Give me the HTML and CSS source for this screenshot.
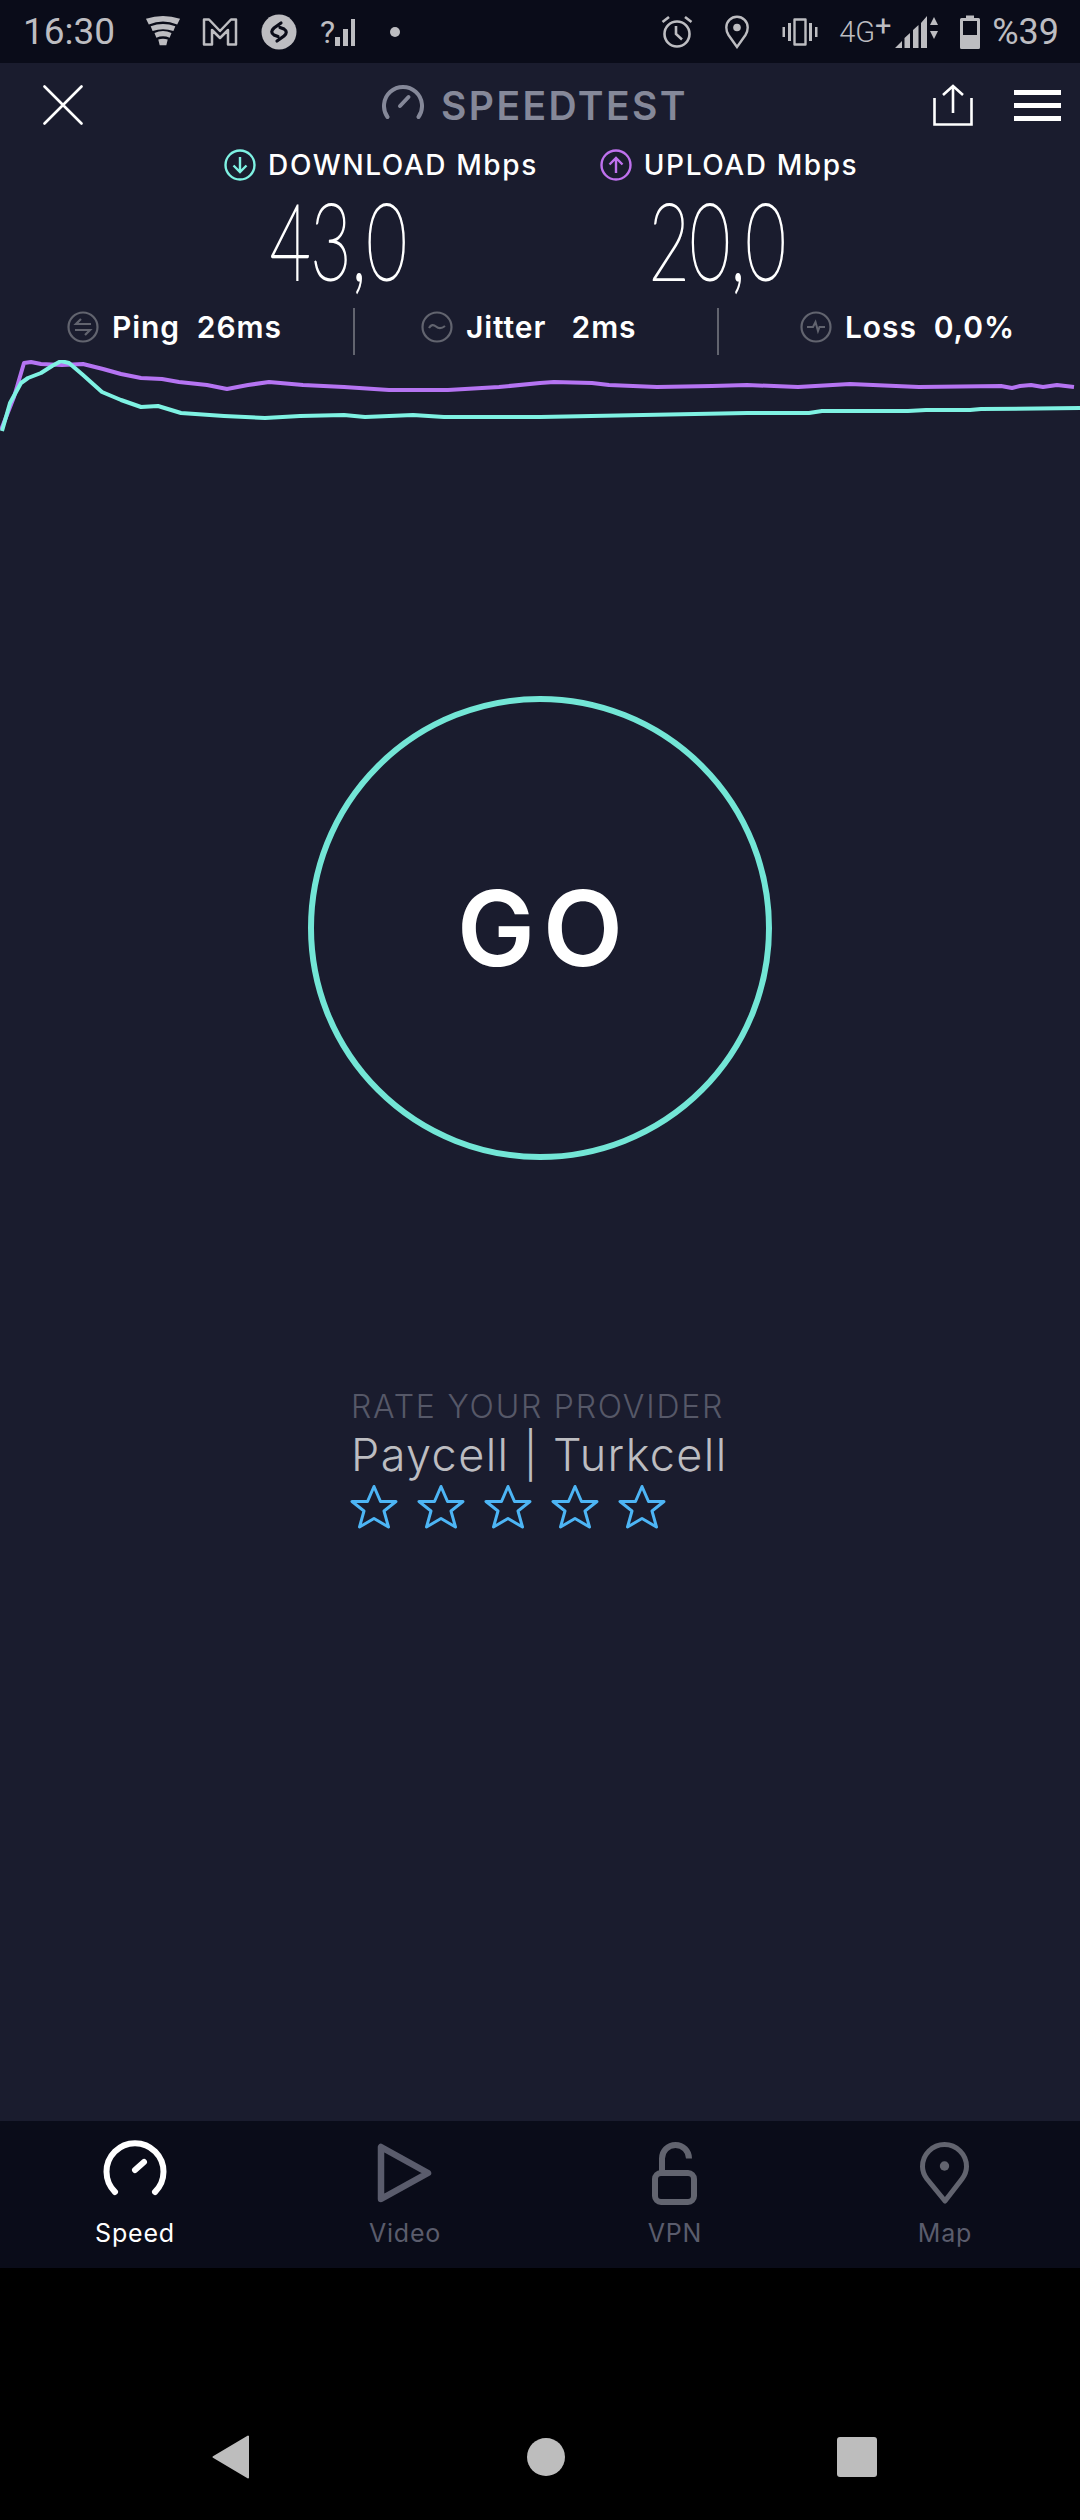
FILE: index.html
```html
<!DOCTYPE html>
<html>
<head>
<meta charset="UTF-8">
<title>Speedtest</title>
<link rel="stylesheet" href="styles.css">
</head>
<body>
<div class="phone">
	<div class="statusbar">
		<div class="status-left">
			<span class="clock">16:30</span>
			<svg class="ico-wifi" width="36" height="38" viewBox="0 0 38 38"><path d="M1 5Q19-1 37 5L34 11Q19 5 4 11Z M6 13Q19 8 32 13L30 18Q19 14 8 18Z M10 20Q19 16 28 20L26 25Q19 22 12 25Z M14 27Q19 25 24 27L22.500 33H15.500Z" fill="#bdbdc1"/></svg>
			<svg class="ico-gmail" width="36" height="30" viewBox="0 0 36 30"><path d="M2 2.500H7L18 14L29 2.500H34V27.500H26V13L18 21L10 13V27.500H2Z" fill="none" stroke="#bdbdc1" stroke-width="2.500" stroke-linejoin="round"/></svg>
			<svg class="ico-shazam" width="36" height="36" viewBox="0 0 36 36"><circle cx="18" cy="18" r="17.500" fill="#bdbdc1"/><path d="M20 9L13 14Q8.500 18 13 21L17 22.500M16 27L23 22Q27.500 18 23 15L19 13.500" fill="none" stroke="#0a0c19" stroke-width="3.200" stroke-linecap="round"/></svg>
			<span class="ico-nosim"><i>?</i><svg width="22" height="30" viewBox="0 0 22 30"><path d="M1 20h5v9H1Z M9 12h5v17H9Z M17 2h4v27h-4Z" fill="#bdbdc1"/></svg></span>
			<span class="dot"></span>
		</div>
		<div class="status-right">
			<svg width="32" height="34" viewBox="0 0 32 34"><circle cx="16" cy="19" r="12.500" fill="none" stroke="#bdbdc1" stroke-width="2.600"/><path d="M15 11V19L21 24.500M1.500 7L8 2M30.500 7L24 2" fill="none" stroke="#bdbdc1" stroke-width="2.600"/></svg>
			<svg class="gap-pin" width="24" height="34" viewBox="0 0 24 34"><path d="M12 32L3.500 20Q1.300 16.500 1.300 12.500A10.700 10.700 0 0 1 22.700 12.500Q22.700 16.500 20.500 20Z" fill="none" stroke="#bdbdc1" stroke-width="2.400"/><circle cx="12" cy="12.500" r="3.800" fill="#bdbdc1"/></svg>
			<svg class="gap-vib" width="36" height="28" viewBox="0 0 36 28"><path d="M12.500 1.500H23.500V26.500H12.500Z" fill="none" stroke="#bdbdc1" stroke-width="2.400" stroke-linejoin="round"/><path d="M6 5h3v18H6Z M27 5h3v18h-3Z M0.500 9h2.500v10H0.500Z M33 9h2.500v10H33Z" fill="#bdbdc1"/></svg>
			<span class="net">4G<b>+</b></span>
			<svg class="ico-signal" width="44" height="34" viewBox="0 0 44 34"><path d="M0 33L7 26V33Z M9.500 33V23L15 18V33Z M18 33V15L23.500 10V33Z M26 33V8L32 1V33Z" fill="#bdbdc1"/><path d="M39 2L43 10H35Z M39 24L43 16H35Z" fill="#bdbdc1"/></svg>
			<svg class="gap-bat" width="20" height="34" viewBox="0 0 20 34"><path d="M6 0.500H14V3H18.500Q20 3 20 4.500V32.500Q20 34 18.500 34H1.500Q0 34 0 32.500V4.500Q0 3 1.500 3H6Z" fill="#bdbdc1"/><rect x="3" y="6" width="14" height="14" fill="#0a0c19"/></svg>
			<span class="pct">%39</span>
		</div>
	</div>

	<div class="app">
		<div class="topbar">
			<svg width="40" height="40" viewBox="0 0 40 40"><path d="M1.500 1.500L38.500 38.500M38.500 1.500L1.500 38.500" stroke="#fff" stroke-width="2.600" stroke-linecap="round"/></svg>
			<div class="brand">
				<svg class="brand-gauge" width="42" height="36" viewBox="0 0 42 36"><path d="M5.500 34A19 19 0 1 1 36.500 34" fill="none" stroke="#858899" stroke-width="4" stroke-linecap="round"/><path d="M18 23L26.500 14" stroke="#858899" stroke-width="4" stroke-linecap="round"/></svg>
				<span>SPEEDTEST</span>
			</div>
			<div class="top-actions">
				<svg width="40" height="42" viewBox="0 0 40 42"><path d="M1.500 14V40.500H38.500V14" fill="none" stroke="#fff" stroke-width="2.600"/><path d="M20 29V2M10 11L20 2L30 11" fill="none" stroke="#fff" stroke-width="2.600"/></svg>
				<div class="burger"><span></span><span></span><span></span></div>
			</div>
		</div>

		<div class="speeds">
			<div class="speed speed-down">
				<div class="speed-label">
					<svg width="32" height="32" viewBox="0 0 32 32"><circle cx="16" cy="16" r="14.500" fill="none" stroke="#7ff2e3" stroke-width="2.400"/><path d="M16 8V23M9.500 16.500L16 23L22.500 16.500" fill="none" stroke="#7ff2e3" stroke-width="2.400"/></svg>
					<span>DOWNLOAD Mbps</span>
				</div>
				<div class="speed-value"><span>43,0</span></div>
			</div>
			<div class="speed speed-up">
				<div class="speed-label">
					<svg width="32" height="32" viewBox="0 0 32 32"><circle cx="16" cy="16" r="14.500" fill="none" stroke="#bf71ee" stroke-width="2.400"/><path d="M16 24V9M9.500 15.500L16 9L22.500 15.500" fill="none" stroke="#bf71ee" stroke-width="2.400"/></svg>
					<span>UPLOAD Mbps</span>
				</div>
				<div class="speed-value"><span>20,0</span></div>
			</div>
		</div>

		<div class="stats">
			<div class="stat stat-ping">
				<svg width="32" height="32" viewBox="0 0 32 32"><circle cx="16" cy="16" r="14.500" fill="none" stroke="#62646f" stroke-width="2.200"/><path d="M14 8L9 13H24M18 24L23 19H8" fill="none" stroke="#62646f" stroke-width="2.200"/></svg>
				<span>Ping&nbsp; 26ms</span>
			</div>
			<div class="stat-sep"></div>
			<div class="stat stat-jitter">
				<svg width="32" height="32" viewBox="0 0 32 32"><circle cx="16" cy="16" r="14.500" fill="none" stroke="#62646f" stroke-width="2.200"/><path d="M8 17Q11 12 15 15.500T24 15" fill="none" stroke="#62646f" stroke-width="2.200"/></svg>
				<span>Jitter&nbsp; &nbsp;2ms</span>
			</div>
			<div class="stat-sep"></div>
			<div class="stat stat-loss">
				<svg width="32" height="32" viewBox="0 0 32 32"><circle cx="16" cy="16" r="14.500" fill="none" stroke="#62646f" stroke-width="2.200"/><path d="M7 16H13L15.500 11L18 20L19.500 16H25" fill="none" stroke="#62646f" stroke-width="2"/></svg>
				<span>Loss&nbsp; 0,0%</span>
			</div>
		</div>

		<svg class="graph" width="1080" height="90" viewBox="0 0 1080 90">
			<path d="M1 70L14 37L24 3L31 2L41 4L62 5L83 4L103 9L121 14L141 18L162 19L179 22L207 25L227 29L248 25L269 22L303 25L344 27L389 30L448 30L499 27L540 23L554 22L592 23L609 25L657 27L712 26L747 25L798 27L850 24L919 27L1001 26L1012 28L1020 26L1031 25L1043 27L1057 25L1074 27" fill="none" stroke="#b574f2" stroke-width="4" stroke-linejoin="round"/>
			<path d="M2 71L10 43L21 23L28 18L41 13L52 6L61 1L69 3L83 15L102 32L121 40L141 47L158 46L181 53L224 56L265 58L300 56L344 55L365 57L413 55L444 57L540 57L643 55L747 53L809 53L822 51L908 51L926 50L970 50L981 49L1080 48" fill="none" stroke="#7ff2e3" stroke-width="4" stroke-linejoin="round"/>
		</svg>

		<div class="go-wrap">
			<div class="go">GO</div>
		</div>

		<div class="rate-wrap">
			<div class="rate">
				<div class="rate-title">RATE YOUR PROVIDER</div>
				<div class="rate-name">Paycell | Turkcell</div>
				<div class="stars">
					<svg width="48" height="46" viewBox="0 0 48 46"><use href="#star"/></svg>
					<svg width="48" height="46" viewBox="0 0 48 46"><use href="#star"/></svg>
					<svg width="48" height="46" viewBox="0 0 48 46"><use href="#star"/></svg>
					<svg width="48" height="46" viewBox="0 0 48 46"><use href="#star"/></svg>
					<svg width="48" height="46" viewBox="0 0 48 46"><use href="#star"/></svg>
				</div>
			</div>
		</div>
	</div>

	<div class="tabs">
		<div class="tab tab-on">
			<svg width="64" height="66" viewBox="0 0 64 66"><path d="M12 53A28.500 28.500 0 1 1 52 53" fill="none" stroke="#fff" stroke-width="6" stroke-linecap="round"/><path d="M32 31L41 23" stroke="#fff" stroke-width="6" stroke-linecap="round"/></svg>
			<span>Speed</span>
		</div>
		<div class="tab">
			<svg width="64" height="66" viewBox="0 0 64 66"><path d="M8 8V60L55 34Z" fill="none" stroke="#5a5c6c" stroke-width="6.500" stroke-linejoin="round"/></svg>
			<span>Video</span>
		</div>
		<div class="tab">
			<svg width="64" height="66" viewBox="0 0 64 66"><path d="M19 32V19.500A13.500 13.500 0 0 1 46 19.500" fill="none" stroke="#62646f" stroke-width="6"/><rect x="12" y="34" width="39" height="29" rx="6" fill="none" stroke="#62646f" stroke-width="6"/></svg>
			<span>VPN</span>
		</div>
		<div class="tab">
			<svg width="64" height="66" viewBox="0 0 64 66"><path d="M32 62L14 40Q9.500 34 9.500 27.500A22 22 0 0 1 53.500 27.500Q53.500 34 49 40Z" fill="none" stroke="#62646f" stroke-width="5" stroke-linejoin="round"/><circle cx="31.500" cy="27" r="4.700" fill="#62646f"/></svg>
			<span>Map</span>
		</div>
	</div>

	<div class="navbar">
		<svg width="38" height="44" viewBox="0 0 38 44"><path d="M36 1.500V42.500L1.500 22Z" fill="#bdbdbd" stroke="#bdbdbd" stroke-width="2" stroke-linejoin="round"/></svg>
		<span class="nav-home"></span>
		<span class="nav-recent"></span>
	</div>
</div>

<svg class="defs" width="0" height="0"><defs><path id="star" d="M24 2.500L30.500 17.500H46L34 27L38.500 43L24 34.500L9.500 43L14 27L2 17.500H17.500Z" fill="none" stroke="#4db5f5" stroke-width="3" stroke-linejoin="round"/></defs></svg>
</body>
</html>
```

FILE: styles.css
```css
html,body{
	margin: 0;
	padding: 0;
	background: #000;
	font-family: "Inter", "Liberation Sans", sans-serif;
}
.phone{
	width: 1080px;
	height: 2520px;
	display: flex;
	flex-direction: column;
	overflow: hidden;
}
.defs{
	position: absolute;
}

/* status bar */
.statusbar{
	height: 63px;
	background: #0a0c19;
	color: #bdbdc1;
	display: flex;
	justify-content: space-between;
	align-items: center;
	padding: 0 21px 0 23px;
}
.status-left,.status-right{
	display: flex;
	align-items: center;
}
.clock{
	font-family: "Roboto", sans-serif;
	font-size: 37px;
	width: 122px;
}
.ico-gmail{
	margin-left: 21px;
}
.ico-shazam{
	margin-left: 23px;
}
.ico-nosim{
	margin-left: 23px;
	display: flex;
	align-items: center;
	width: 34px;
}
.ico-nosim i{
	font: normal 32px "Roboto", sans-serif;
	margin-right: -1px;
}
.ico-nosim svg{
	flex: none;
}
.dot{
	width: 10px;
	height: 10px;
	border-radius: 50%;
	background: #bdbdc1;
	margin-left: 36px;
}
.gap-pin{
	margin-left: 32px;
}
.gap-vib{
	margin-left: 33px;
}
.net{
	font-family: "Roboto", sans-serif;
	font-size: 29px;
	margin-left: 21px;
	width: 56px;
	white-space: nowrap;
	font-weight: 300;
}
.net b{
	font-weight: 400;
	position: relative;
	top: -6px;
}
.gap-bat{
	margin-left: 21px;
}
.pct{
	font-family: "Roboto", sans-serif;
	font-size: 36px;
	margin-left: 12px;
}

/* app */
.app{
	height: 2058px;
	background: #1a1c2e;
	display: flex;
	flex-direction: column;
}
.topbar{
	height: 84px;
	display: grid;
	grid-template-columns: 1fr auto 1fr;
	align-items: center;
	padding: 0 19px 0 43px;
}
.brand{
	display: flex;
	align-items: center;
	gap: 17px;
	color: #858899;
	font-size: 39px;
	font-weight: 600;
	letter-spacing: 2.4px;
	margin-right: 34px;
}
.brand-gauge{
	margin-bottom: 8px;
}
.top-actions{
	display: flex;
	justify-content: flex-end;
	align-items: center;
	gap: 41px;
}
.burger{
	width: 47px;
	display: flex;
	flex-direction: column;
	gap: 8px;
}
.burger span{
	height: 5px;
	background: #fff;
}

.speeds{
	display: flex;
	height: 158px;
}
.speed{
	display: flex;
	flex-direction: column;
	align-items: center;
}
.speed-down{
	margin-left: 223px;
	width: 316px;
}
.speed-up{
	margin-left: 64px;
	width: 252px;
}
.speed-label{
	display: flex;
	align-items: center;
	gap: 12px;
	color: #fff;
	font-size: 28px;
	font-weight: 500;
	letter-spacing: 1.6px;
	height: 36px;
	white-space: nowrap;
}
.speed-value{
	height: 88px;
	margin-top: 12px;
	display: flex;
	justify-content: center;
}
.speed-value span{
	display: block;
	color: #fff;
	font-family: "Lato", sans-serif;
	font-weight: 100;
	font-size: 106px;
	line-height: 88px;
	-webkit-text-stroke: 2px #fff;
	transform: scaleX(.665);
}
.speed-down .speed-value{
	margin-right: 86px;
}
.speed-up .speed-value{
	margin-right: 23px;
}

.stats{
	display: flex;
	align-items: center;
	height: 44px;
	color: #fff;
	font-size: 30px;
	font-weight: 600;
	letter-spacing: .9px;
}
.stat{
	display: flex;
	align-items: center;
	gap: 13px;
	white-space: nowrap;
}
.stat-ping{
	margin-left: 67px;
	width: 286px;
}
.stat-jitter{
	margin-left: 66px;
	width: 296px;
}
.stat-loss{
	margin-left: 81px;
}
.stat-sep{
	width: 2px;
	height: 47px;
	margin-top: 8px;
	background: #62646f;
}

.graph{
	display: block;
	margin-top: 11px;
	flex: none;
}

.go-wrap{
	display: flex;
	justify-content: center;
	margin-top: 246px;
}
.go{
	box-sizing: border-box;
	width: 464px;
	height: 464px;
	border: 6px solid #73e6d6;
	border-radius: 50%;
	color: #fff;
	display: flex;
	align-items: center;
	justify-content: center;
	font-size: 104px;
	font-weight: 600;
	letter-spacing: 8px;
	padding-left: 8px;
}

.rate-wrap{
	margin-top: 228px;
	padding-left: 351px;
}
.rate-title{
	color: #565868;
	font-size: 32px;
	font-weight: 300;
	letter-spacing: 1.8px;
	line-height: 38px;
	white-space: nowrap;
}
.rate-name{
	color: #bdbdc1;
	font-size: 45px;
	font-weight: 300;
	letter-spacing: 1.4px;
	line-height: 58px;
	white-space: nowrap;
}
.stars{
	display: flex;
	gap: 19px;
	margin-left: -1px;
}

/* bottom tabs */
.tabs{
	height: 147px;
	background: #0a0c19;
	display: grid;
	grid-template-columns: repeat(4, 270px);
}
.tab{
	display: flex;
	flex-direction: column;
	align-items: center;
	padding-top: 18px;
	color: #5a5c6c;
	font-size: 25px;
	letter-spacing: .8px;
}
.tab span{
	margin-top: 13px;
}
.tab-on{
	color: #fff;
}

/* android nav */
.navbar{
	flex: 1;
	background: #000;
	display: flex;
	align-items: center;
	padding: 126px 0 0 212px;
	box-sizing: border-box;
}
.nav-home{
	width: 38px;
	height: 38px;
	border-radius: 50%;
	background: #bdbdbd;
	margin-left: 277px;
}
.nav-recent{
	width: 40px;
	height: 40px;
	border-radius: 3px;
	background: #bdbdbd;
	margin-left: 272px;
}
```
